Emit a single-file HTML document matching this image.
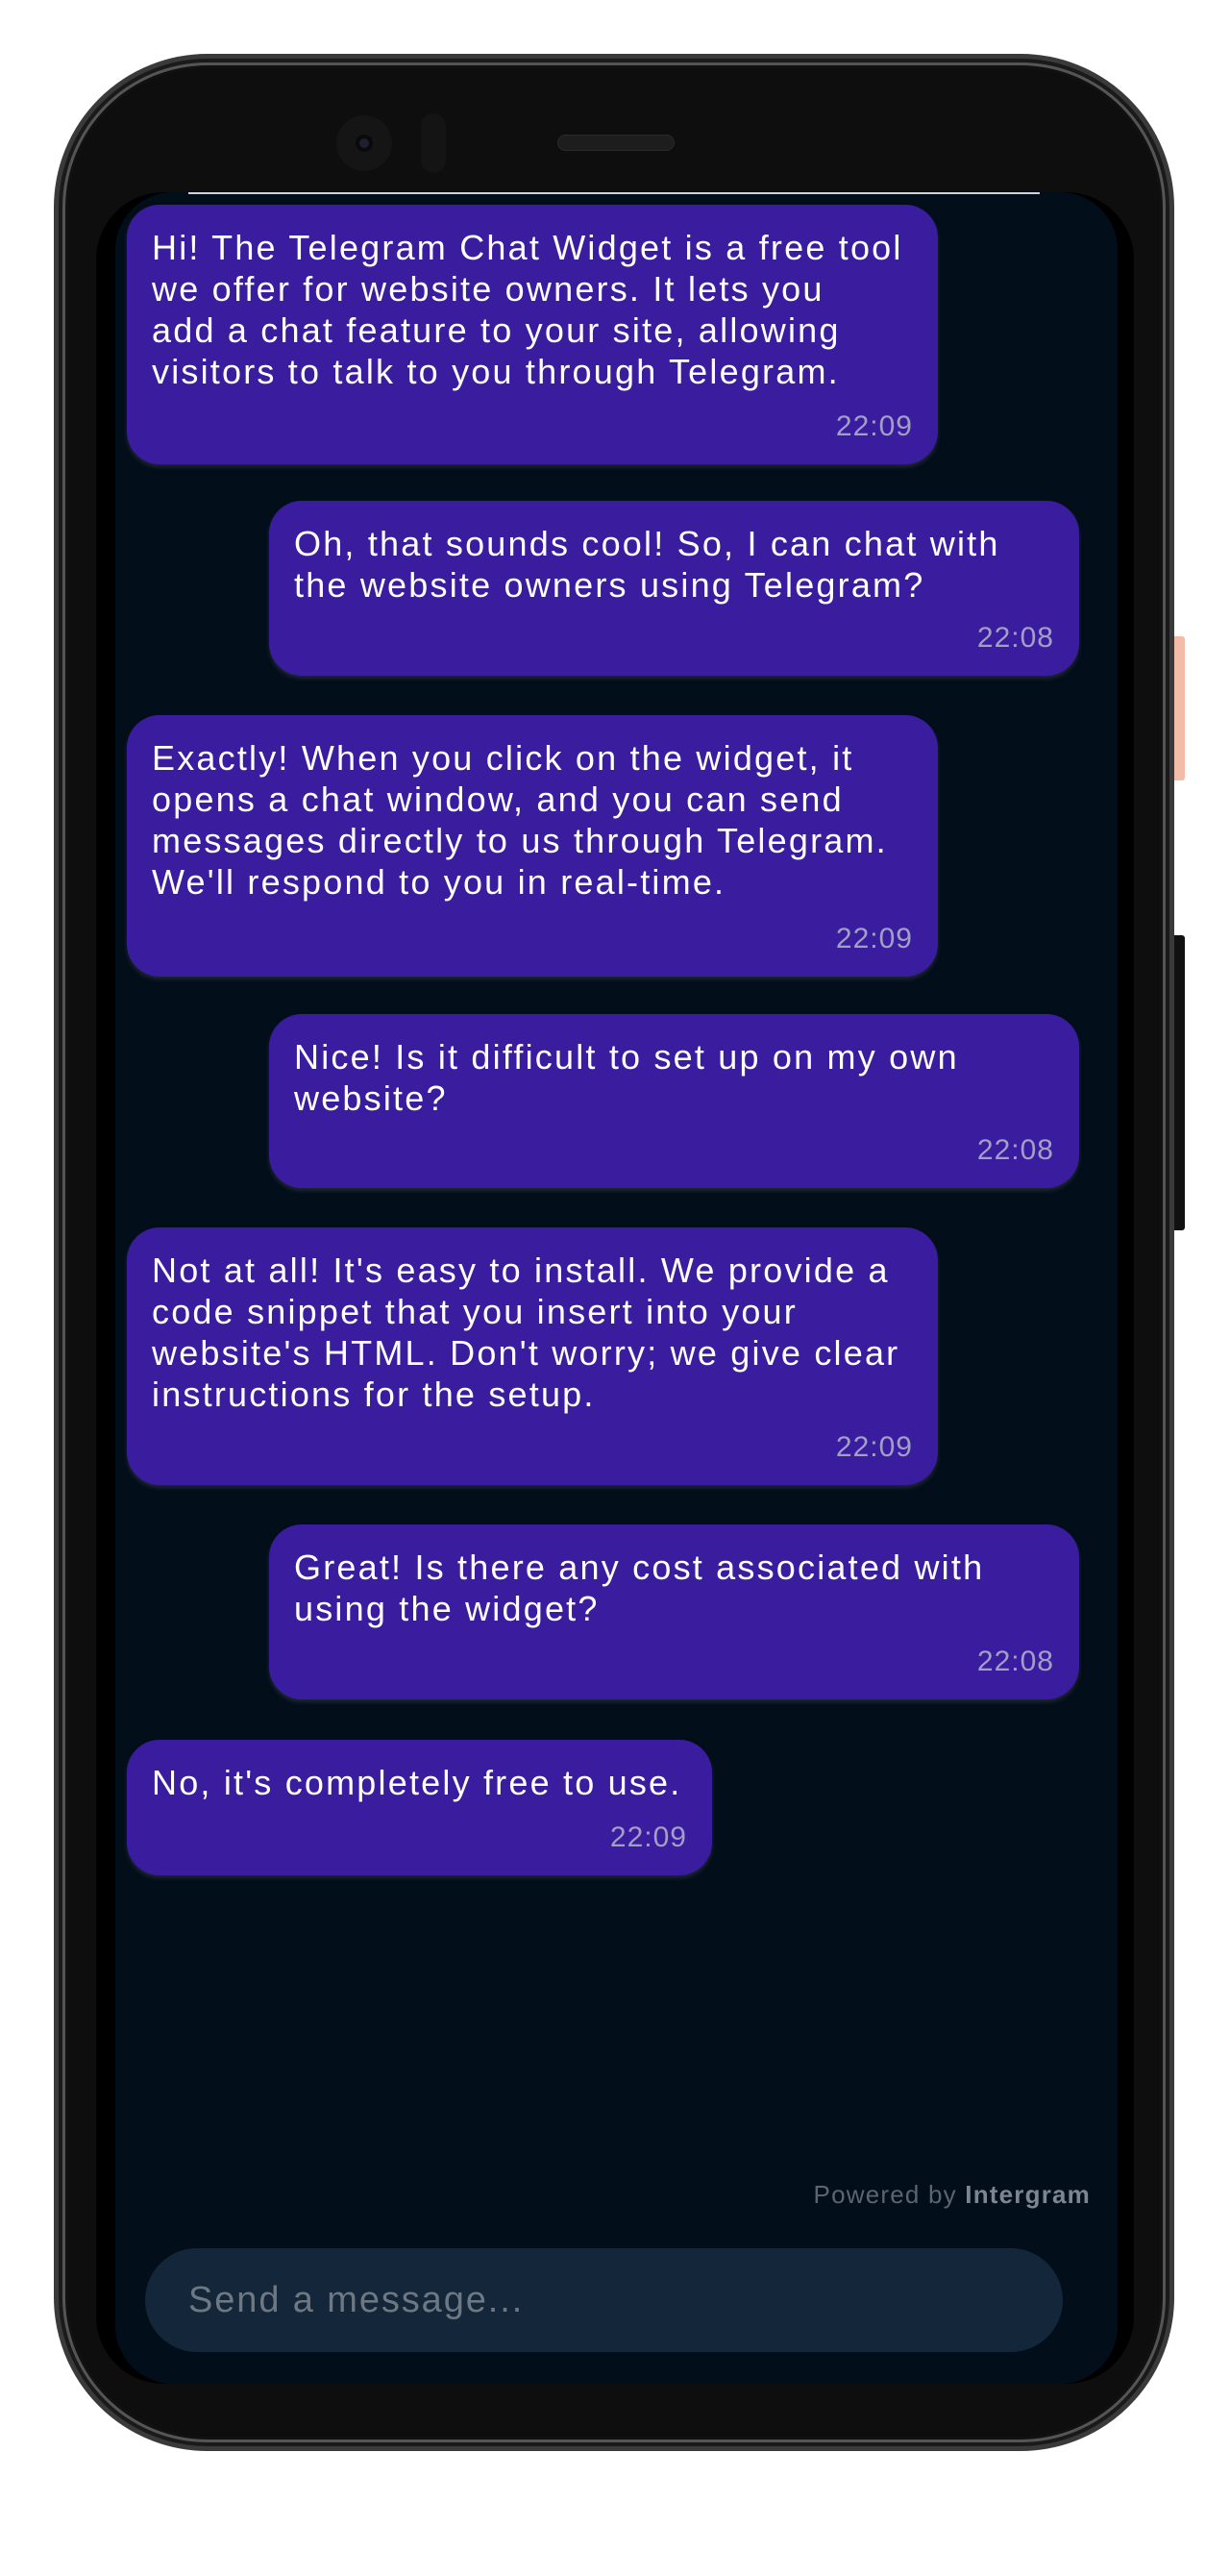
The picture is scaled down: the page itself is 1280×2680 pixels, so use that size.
<!DOCTYPE html>
<html><head><meta charset="utf-8">
<style>
*{margin:0;padding:0;box-sizing:border-box}
html,body{width:1280px;height:2680px;background:#fff;overflow:hidden;font-family:"Liberation Sans","DejaVu Sans",sans-serif}
.phone{position:absolute;left:56px;top:56px;width:1166px;height:2494px;border-radius:160px;background:#0e0e0e;border:5px solid #3a3a3a;box-shadow:inset 0 0 0 4px #1a1a1a,inset 0 0 0 7px #555,inset 0 0 0 10px #111}
.screen{position:absolute;left:100px;top:200px;width:1080px;height:2280px;background:#000;border-radius:70px 70px 70px 70px;overflow:hidden}
.chat{position:absolute;left:20px;top:0;width:1043px;height:2280px;background:#020f1a;border-radius:60px 60px 60px 60px}
.topline{position:absolute;left:96px;top:0;width:886px;height:2px;background:#cfd4da}
.b{position:absolute;background:#3a1c9e;border-radius:34px;box-shadow:0 3px 4px rgba(60,60,80,.5);color:#fff;font-size:36px;line-height:43px;white-space:nowrap;letter-spacing:2.2px}
.b .t{position:absolute;left:26px;top:23px}
.b .tm{position:absolute;right:26px;bottom:22px;font-size:30px;color:#a29fc6;line-height:34px;letter-spacing:1px}
.cam{position:absolute;left:350px;top:120px;width:58px;height:58px;border-radius:50%;background:#151515}
.cam:after{content:"";position:absolute;left:20px;top:20px;width:18px;height:18px;border-radius:50%;background:#1c2030;box-shadow:inset 0 0 0 4px #0a0a0a}
.sens{position:absolute;left:438px;top:118px;width:26px;height:62px;border-radius:13px;background:#141414}
.spk{position:absolute;left:580px;top:140px;width:122px;height:17px;border-radius:9px;background:#1d1d1d;border:1px solid #2a2a2a}
.btn1{position:absolute;left:1222px;top:662px;width:11px;height:150px;background:#f2bca9;border-radius:0 3px 3px 0}
.btn2{position:absolute;left:1222px;top:973px;width:11px;height:307px;background:#111;border-radius:0 3px 3px 0}
</style></head><body>
<div class="phone"></div>
<div class="btn1"></div><div class="btn2"></div>
<div class="cam"></div><div class="sens"></div><div class="spk"></div>
<div class="screen">
 <div class="chat"></div>
 <div class="topline"></div>
</div>

<div class="b" style="left:132px;top:213px;width:844px;height:270px"><div class="t">Hi! The Telegram Chat Widget is a free tool<br>we offer for website owners. It lets you<br>add a chat feature to your site, allowing<br>visitors to talk to you through Telegram.</div><div class="tm">22:09</div></div>

<div class="b" style="left:280px;top:521px;width:843px;height:182px"><div class="t">Oh, that sounds cool! So, I can chat with<br>the website owners using Telegram?</div><div class="tm">22:08</div></div>

<div class="b" style="left:132px;top:744px;width:844px;height:272px"><div class="t">Exactly! When you click on the widget, it<br>opens a chat window, and you can send<br>messages directly to us through Telegram.<br>We'll respond to you in real-time.</div><div class="tm">22:09</div></div>

<div class="b" style="left:280px;top:1055px;width:843px;height:181px"><div class="t">Nice! Is it difficult to set up on my own<br>website?</div><div class="tm">22:08</div></div>

<div class="b" style="left:132px;top:1277px;width:844px;height:268px"><div class="t">Not at all! It's easy to install. We provide a<br>code snippet that you insert into your<br>website's HTML. Don't worry; we give clear<br>instructions for the setup.</div><div class="tm">22:09</div></div>

<div class="b" style="left:280px;top:1586px;width:843px;height:182px"><div class="t">Great! Is there any cost associated with<br>using the widget?</div><div class="tm">22:08</div></div>

<div class="b" style="left:132px;top:1810px;width:609px;height:141px"><div class="t">No, it's completely free to use.</div><div class="tm">22:09</div></div>

<div style="position:absolute;right:145px;top:2268px;font-size:26px;letter-spacing:1.2px;color:#5b6470;white-space:nowrap">Powered by <b style="color:#7c8591">Intergram</b></div>

<div style="position:absolute;left:151px;top:2339px;width:955px;height:108px;border-radius:54px;background:#14263a;color:#6e7882;font-size:38px;letter-spacing:1.9px;line-height:108px;padding-left:45px">Send a message...</div>
</body></html>
